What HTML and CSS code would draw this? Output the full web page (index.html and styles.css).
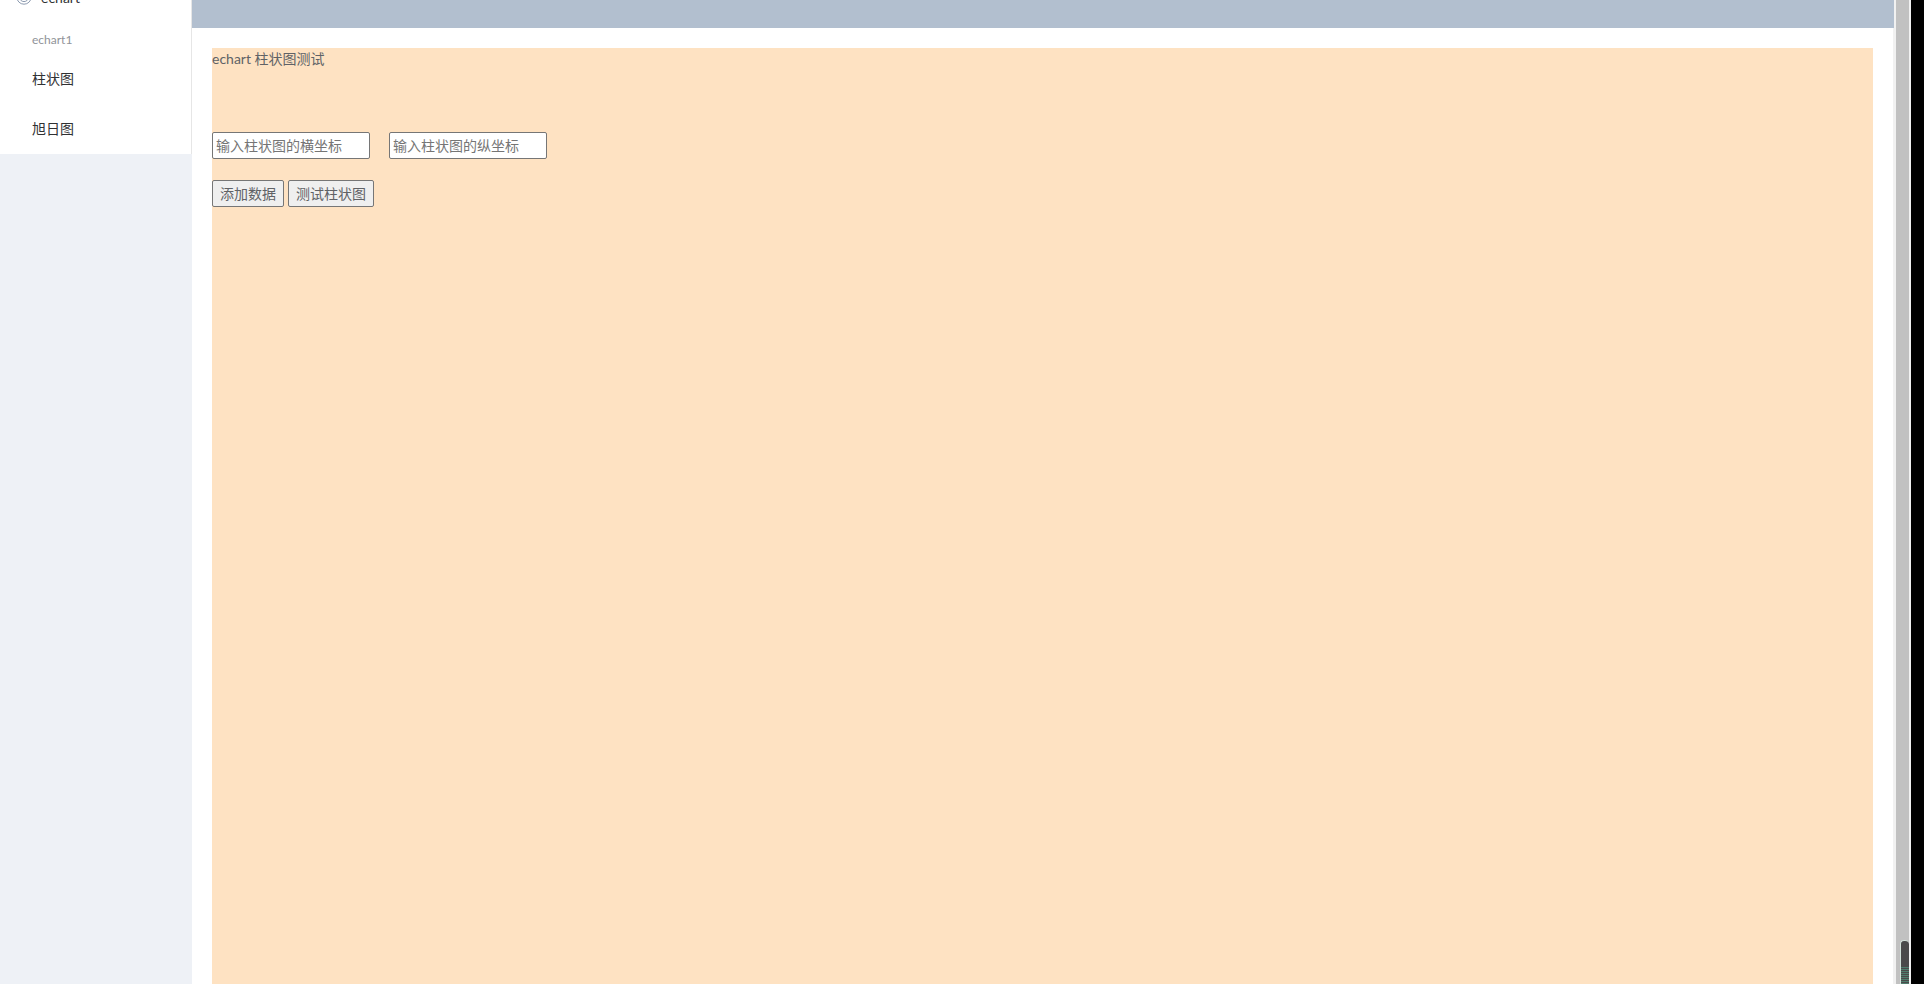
FILE: index.html
```html
<!DOCTYPE html>
<html lang="zh">
<head>
<meta charset="utf-8">
<title>echart</title>
<link rel="stylesheet" href="styles.css">
</head>
<body>
<div class="app">
  <div class="page">
    <aside class="sidebar">
      <div class="menu">
        <div class="menu-title">
          <svg class="menu-icon" viewBox="0 0 16 16"><circle cx="8" cy="8" r="7.2"/><circle cx="8" cy="8" r="4.6"/><circle cx="8" cy="8" r="2"/></svg>
          <span>echart</span>
        </div>
        <div class="group-title">echart1</div>
        <div class="menu-item">柱状图</div>
        <div class="menu-item">旭日图</div>
      </div>
    </aside>
    <main class="main">
      <div class="topbar"></div>
      <div class="content">
        <div class="panel">
          <div class="heading">echart 柱状图测试</div>
          <div class="inputs">
            <input class="field" placeholder="输入柱状图的横坐标">
            <input class="field" placeholder="输入柱状图的纵坐标">
          </div>
          <div class="buttons">
            <button class="btn">添加数据</button>
            <button class="btn">测试柱状图</button>
          </div>
        </div>
      </div>
    </main>
  </div>
  <div class="scrollbar"><div class="thumb"><div class="grip"></div></div></div>
  <div class="black"></div>
</div>
</body>
</html>
```
FILE: styles.css
```css
html, body { margin: 0; height: 100%; overflow: hidden; background: #fff; }
body { font-family: Lato, "Noto Sans CJK SC", sans-serif; font-size: 14px; color: #606266; }
.app { display: flex; height: 984px; width: 1924px; overflow: hidden; }
.page { flex: 1; display: flex; min-width: 0; }
.sidebar { width: 192px; flex: none; background: #eef1f6; overflow: hidden; }
.menu { height: 182px; margin-top: -28px; background: #fff; border-right: 1px solid #e6e6e6; box-sizing: border-box; }
.menu-title { height: 50px; padding-left: 16px; display: flex; align-items: center; gap: 9px; color: #303133; }
.menu-icon { width: 16px; height: 16px; flex: none; fill: none; stroke: #8d9bb0; stroke-width: 1; }
.group-title { height: 32px; box-sizing: border-box; padding: 3px 0 0 32px; font-size: 12px; line-height: 29px; color: #909399; }
.menu-item { height: 50px; line-height: 49px; padding-left: 32px; color: #303133; }
.main { flex: 1; min-width: 0; }
.topbar { height: 28px; background: #b2bfcf; }
.content { padding: 20px; border-right: 1px solid #f1f1f1; }
.panel { background: #fee2c2; height: 960px; }
.heading { height: 84px; line-height: 22px; }
.inputs { display: flex; gap: 19px; }
.field { width: 158px; height: 27px; box-sizing: border-box; border: 1px solid #767676; border-radius: 2px; padding: 1px 3px; font: inherit; font-size: 14px; background: #fff; }
.field::placeholder { color: #757575; }
.buttons { display: flex; gap: 4px; margin-top: 21px; }
.btn { height: 27px; padding: 0 7px 2px; border: 1px solid #767676; border-radius: 2px; background: #efefef; font: inherit; font-size: 14px; color: #606266; }
.scrollbar { width: 17px; flex: none; background: #c1c1c1; border-left: 2px solid #f1f1f1; border-right: 2px solid #f1f1f1; box-sizing: border-box; display: flex; flex-direction: column; justify-content: flex-end; }
.thumb { height: 44px; margin-left: 4px; box-sizing: border-box; background: #4a4a4a; border: 1px solid #d3e2da; border-width: 1px 0 0 1px; border-radius: 4px 4px 0 0; display: flex; flex-direction: column; justify-content: flex-end; }
.grip { height: 17px; background: repeating-linear-gradient(to bottom, #4f7d6d 0 1px, #4a4a4a 1px 2px); }
.black { width: 13px; flex: none; background: #000; }
```
